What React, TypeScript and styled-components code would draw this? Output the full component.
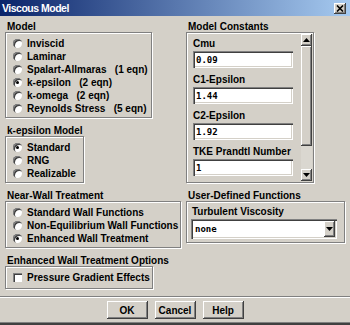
import styled, { createGlobalStyle } from 'styled-components';

const GlobalStyle = createGlobalStyle`
  html, body {
    margin: 0;
    padding: 0;
    background: #d4d0c8;
  }
  body {
    font-family: "Liberation Sans", Arial, sans-serif;
  }
`;

const modelOptions = [
  'Inviscid',
  'Laminar',
  'Spalart-Allmaras   (1 eqn)',
  'k-epsilon   (2 eqn)',
  'k-omega   (2 eqn)',
  'Reynolds Stress   (5 eqn)',
];

const kEpsilonOptions = ['Standard', 'RNG', 'Realizable'];

const wallOptions = [
  'Standard Wall Functions',
  'Non-Equilibrium Wall Functions',
  'Enhanced Wall Treatment',
];

const constants = [
  { label: 'Cmu', value: '0.09' },
  { label: 'C1-Epsilon', value: '1.44' },
  { label: 'C2-Epsilon', value: '1.92' },
  { label: 'TKE Prandtl Number', value: '1' },
];

const ArrowUp = () => (
  <svg width="7" height="4" viewBox="0 0 7 4">
    <polygon points="3.5,0 7,4 0,4" fill="#000" />
  </svg>
);

const ArrowDown = () => (
  <svg width="7" height="4" viewBox="0 0 7 4">
    <polygon points="0,0 7,0 3.5,4" fill="#000" />
  </svg>
);

const App = () => {
  return (
    <Window>
      <GlobalStyle />
      <TitleBar>
        <TitleText>Viscous Model</TitleText>
        <CloseButton>
          <svg width="8" height="7" viewBox="0 0 8 7">
            <path d="M1 0.5 L7 6.5 M7 0.5 L1 6.5" stroke="#000" strokeWidth="1.6" />
          </svg>
        </CloseButton>
      </TitleBar>

      <Body>
        <Column $width={175}>
          <Group>
            <GroupLabel>Model</GroupLabel>
            <GroupBox $width={147}>
              {modelOptions.map((o) => (
                <OptionRow key={o}>
                  <Radio $checked={o.startsWith('k-epsilon')} />
                  <OptionText>{o}</OptionText>
                </OptionRow>
              ))}
            </GroupBox>
          </Group>

          <Group>
            <GroupLabel>k-epsilon Model</GroupLabel>
            <GroupBox $width={79}>
              {kEpsilonOptions.map((o) => (
                <OptionRow key={o}>
                  <Radio $checked={o === 'Standard'} />
                  <OptionText>{o}</OptionText>
                </OptionRow>
              ))}
            </GroupBox>
          </Group>

          <Group>
            <GroupLabel>Near-Wall Treatment</GroupLabel>
            <GroupBox $width={176}>
              {wallOptions.map((o) => (
                <OptionRow key={o}>
                  <Radio $checked={o === 'Enhanced Wall Treatment'} />
                  <OptionText>{o}</OptionText>
                </OptionRow>
              ))}
            </GroupBox>
          </Group>

          <Group>
            <GroupLabel>Enhanced Wall Treatment Options</GroupLabel>
            <GroupBox $width={148} $bottom={4}>
              <OptionRow>
                <Checkbox />
                <OptionText>Pressure Gradient Effects</OptionText>
              </OptionRow>
            </GroupBox>
          </Group>
        </Column>

        <Column>
          <Group>
            <GroupLabel>Model Constants</GroupLabel>
            <ConstantsBox>
              <FieldList>
                {constants.map((c) => (
                  <Field key={c.label}>
                    <FieldLabel>{c.label}</FieldLabel>
                    <TextInput readOnly defaultValue={c.value} />
                  </Field>
                ))}
              </FieldList>
              <ScrollBar>
                <ScrollButton>
                  <ArrowUp />
                </ScrollButton>
                <ScrollThumb />
                <ScrollTrack />
                <ScrollButton>
                  <ArrowDown />
                </ScrollButton>
              </ScrollBar>
            </ConstantsBox>
          </Group>

          <Group>
            <GroupLabel>User-Defined Functions</GroupLabel>
            <UdfBox>
              <FieldLabel>Turbulent Viscosity</FieldLabel>
              <Dropdown>
                <DropdownText>none</DropdownText>
                <DropdownButton>
                  <ArrowDown />
                </DropdownButton>
              </Dropdown>
            </UdfBox>
          </Group>
        </Column>
      </Body>

      <Separator />
      <ButtonRow>
        <Button>OK</Button>
        <Button>Cancel</Button>
        <Button>Help</Button>
      </ButtonRow>
    </Window>
  );
};

export default App;

const Window = styled.div`
  width: 350px;
  height: 325px;
  box-sizing: border-box;
  background: #d4d0c8;
  display: flex;
  flex-direction: column;
  overflow: hidden;
  box-shadow: inset 0 -2px 0 #404040, inset 0 -3px 0 #808080;
`;

const TitleBar = styled.div`
  flex: none;
  height: 16px;
  display: flex;
  align-items: center;
  justify-content: space-between;
  padding: 0 4px 0 2px;
  background: linear-gradient(90deg, #0a246a, #a6caf0);
`;

const TitleText = styled.div`
  color: #fff;
  font-size: 10.5px;
  font-weight: 700;
  letter-spacing: -0.5px;
  line-height: 16px;
`;

const CloseButton = styled.div`
  width: 12px;
  height: 11px;
  box-sizing: border-box;
  display: flex;
  align-items: center;
  justify-content: center;
  background: #d4d0c8;
  box-shadow: inset -1px -1px 0 #404040, inset 1px 1px 0 #fff,
    inset -2px -2px 0 #808080;
`;

const Body = styled.div`
  display: flex;
  gap: 6px;
  padding: 5px 5px 0 5px;
`;

const Column = styled.div<{ $width?: number }>`
  display: flex;
  flex-direction: column;
  gap: 7px;
  width: ${({ $width }) => ($width ? `${$width}px` : 'auto')};
  flex: ${({ $width }) => ($width ? 'none' : '1')};
`;

const Group = styled.div`
  display: flex;
  flex-direction: column;
`;

const GroupLabel = styled.div`
  height: 11px;
  line-height: 11px;
  padding-left: 2px;
  font-size: 10px;
  font-weight: 700;
  color: #000;
  white-space: nowrap;
`;

const GroupBox = styled.div<{ $width: number; $bottom?: number }>`
  width: ${({ $width }) => $width}px;
  box-sizing: border-box;
  border: 1px solid #808080;
  box-shadow: inset 1px 1px 0 #fff, 1px 1px 0 #fff;
  padding: 4px 0 ${({ $bottom }) => $bottom ?? 2}px 7px;
`;

const OptionRow = styled.div`
  height: 13px;
  display: flex;
  align-items: center;
  gap: 5px;
`;

const OptionText = styled.span`
  font-size: 10px;
  font-weight: 700;
  color: #000;
  white-space: pre;
  line-height: 13px;
`;

const Radio = styled.span<{ $checked?: boolean }>`
  position: relative;
  flex: none;
  width: 9px;
  height: 9px;
  border-radius: 50%;
  background: #fff;
  box-shadow: inset 1px 1px 0 #808080, inset 2px 2px 0 #404040;

  &::after {
    content: '';
    display: ${({ $checked }) => ($checked ? 'block' : 'none')};
    position: absolute;
    left: 3px;
    top: 3px;
    width: 3px;
    height: 3px;
    border-radius: 50%;
    background: #000;
  }
`;

const Checkbox = styled.span`
  flex: none;
  width: 9px;
  height: 9px;
  background: #fff;
  box-shadow: inset 1px 1px 0 #808080, inset 2px 2px 0 #404040;
`;

const ConstantsBox = styled.div`
  width: 128px;
  height: 151px;
  box-sizing: border-box;
  display: flex;
  border: 1px solid #808080;
  box-shadow: inset 1px 1px 0 #fff, 1px 1px 0 #fff;
`;

const FieldList = styled.div`
  flex: 1;
  padding: 5px 0 0 6px;
  overflow: hidden;
`;

const Field = styled.div`
  display: flex;
  flex-direction: column;
  gap: 1px;
  margin-bottom: 6px;
`;

const FieldLabel = styled.div`
  height: 12px;
  line-height: 12px;
  font-size: 10px;
  font-weight: 700;
  color: #000;
  white-space: nowrap;
`;

const TextInput = styled.input`
  width: 100px;
  height: 17px;
  box-sizing: border-box;
  margin: 0;
  border: none;
  outline: none;
  padding: 1px 0 0 3px;
  background: #fff;
  font-family: "DejaVu Sans Mono", "Liberation Mono", monospace;
  font-size: 9px;
  font-weight: 700;
  color: #000;
  box-shadow: inset 1px 1px 0 #808080, inset 2px 2px 0 #404040,
    inset -1px -1px 0 #fff, inset -2px -2px 0 #d4d0c8;
`;

const ScrollBar = styled.div`
  width: 11px;
  flex: none;
  display: flex;
  flex-direction: column;
  margin: 1px 1px 1px 0;
`;

const ScrollButton = styled.div`
  height: 12px;
  flex: none;
  display: flex;
  align-items: center;
  justify-content: center;
  background: #d4d0c8;
  box-shadow: inset -1px -1px 0 #404040, inset 1px 1px 0 #fff,
    inset -2px -2px 0 #808080;
`;

const ScrollThumb = styled.div`
  height: 100px;
  flex: none;
  background: #d4d0c8;
  box-shadow: inset -1px -1px 0 #404040, inset 1px 1px 0 #fff,
    inset -2px -2px 0 #808080;
`;

const ScrollTrack = styled.div`
  flex: 1;
  background: #dad7d0;
`;

const UdfBox = styled.div`
  width: 159px;
  box-sizing: border-box;
  border: 1px solid #808080;
  box-shadow: inset 1px 1px 0 #fff, 1px 1px 0 #fff;
  padding: 4px 0 3px 4px;
  display: flex;
  flex-direction: column;
  gap: 1px;

  & > ${FieldLabel} {
    padding-left: 1px;
  }
`;

const Dropdown = styled.div`
  width: 146px;
  height: 20px;
  box-sizing: border-box;
  display: flex;
  align-items: center;
  justify-content: space-between;
  padding: 2px;
  background: #fff;
  box-shadow: inset 1px 1px 0 #808080, inset 2px 2px 0 #404040,
    inset -1px -1px 0 #fff, inset -2px -2px 0 #d4d0c8;
`;

const DropdownText = styled.span`
  padding-left: 2px;
  font-family: "DejaVu Sans Mono", "Liberation Mono", monospace;
  font-size: 9px;
  font-weight: 700;
  color: #000;
`;

const DropdownButton = styled.div`
  width: 11px;
  height: 16px;
  display: flex;
  align-items: center;
  justify-content: center;
  background: #d4d0c8;
  box-shadow: inset -1px -1px 0 #404040, inset 1px 1px 0 #fff,
    inset -2px -2px 0 #808080;
`;

const Separator = styled.div`
  margin: 7px 0 0 0;
  height: 1px;
  background: #808080;
  border-bottom: 1px solid #fff;
`;

const ButtonRow = styled.div`
  display: flex;
  justify-content: center;
  gap: 7px;
  margin-top: 3px;
`;

const Button = styled.div`
  width: 41px;
  height: 18px;
  box-sizing: border-box;
  display: flex;
  align-items: center;
  justify-content: center;
  background: #d4d0c8;
  font-size: 10px;
  font-weight: 700;
  color: #000;
  box-shadow: inset -1px -1px 0 #404040, inset 1px 1px 0 #fff,
    inset -2px -2px 0 #808080;
`;
